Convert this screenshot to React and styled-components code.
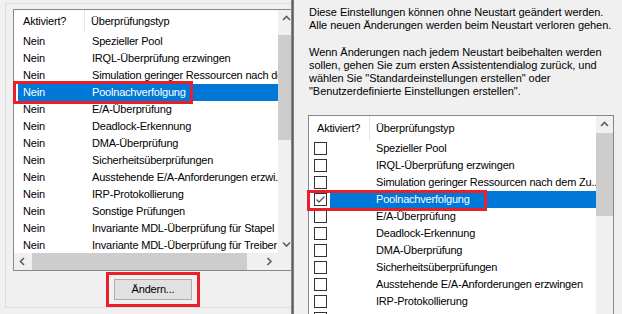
import React from "react";
import styled, { createGlobalStyle } from "styled-components";

const Global = createGlobalStyle`
  html, body { margin: 0; padding: 0; background: #f0f0f0; }
  body {
    font-family: "Liberation Sans", Arial, sans-serif;
    font-size: 11px;
    letter-spacing: -0.2px;
    color: #000;
  }
  * { box-sizing: border-box; }
`;

const Screen = styled.div`
  display: flex;
  width: 622px;
  height: 314px;
  overflow: hidden;
  background: #f0f0f0;
`;

const LeftWindow = styled.div`
  flex: 0 0 291px;
  overflow: hidden;
  padding: 3px 0 0 5px;
`;

const GroupBox = styled.div`
  width: 320px;
  height: 305px;
  border: 1px solid #dcdcdc;
  border-right: none;
  padding: 5px 0 0 7px;
  display: flex;
  flex-direction: column;
`;

const ListView = styled.div`
  position: relative;
  flex: none;
  width: ${(p) => p.$w}px;
  height: ${(p) => p.$h}px;
  margin-top: ${(p) => p.$mt || 0}px;
  border: 1px solid #828790;
  background: #fff;
  display: grid;
  grid-template-columns: ${(p) => p.$cw}px 17px;
  grid-template-rows: ${(p) => (p.$hscroll ? "1fr 17px" : "1fr")};
`;

const Content = styled.div`
  overflow: hidden;
  display: flex;
  flex-direction: column;
  white-space: nowrap;
`;

const Header = styled.div`
  display: flex;
  flex: none;
  height: ${(p) => p.$h}px;
  align-items: stretch;
`;

const HeaderCell = styled.div`
  flex: none;
  width: ${(p) => (p.$w ? `${p.$w}px` : "auto")};
  padding-left: ${(p) => p.$pad}px;
  display: flex;
  align-items: center;
  border-right: ${(p) => (p.$divider ? "1px solid #e5e5e5" : "none")};
  padding-bottom: 1px;
`;

const Row = styled.div`
  display: flex;
  flex: none;
  height: 17px;
  line-height: 17px;
  margin-left: ${(p) => p.$inset || 0}px;
  background: ${(p) => (p.$sel ? "#0078d7" : "transparent")};
  color: ${(p) => (p.$sel ? "#fff" : "#000")};
`;

const Cell = styled.div`
  flex: none;
  width: ${(p) => (p.$w ? `${p.$w}px` : "auto")};
  padding-left: ${(p) => p.$pad || 0}px;
`;

const CheckRow = styled.div`
  display: flex;
  flex: none;
  height: 17px;
  line-height: 17px;
`;

const CheckCell = styled.div`
  flex: none;
  width: 21px;
  padding-left: 5px;
  display: flex;
  align-items: center;
`;

const SelArea = styled.div`
  flex: 1;
  display: flex;
  background: ${(p) => (p.$sel ? "#0078d7" : "transparent")};
  color: ${(p) => (p.$sel ? "#fff" : "#000")};
`;

const Box = styled.div`
  width: 13px;
  height: 13px;
  border: 1px solid #333;
  background: #fff;
  display: flex;
  align-items: center;
  justify-content: center;
`;

const VScroll = styled.div`
  background: #f0f0f0;
  display: flex;
  flex-direction: column;
`;

const HScroll = styled.div`
  background: #f0f0f0;
  display: flex;
`;

const Corner = styled.div`
  background: #f0f0f0;
`;

const ArrowBtn = styled.div`
  flex: none;
  width: 17px;
  height: 17px;
  display: flex;
  align-items: center;
  justify-content: center;
`;

const VThumb = styled.div`
  flex: none;
  margin: ${(p) => p.$off}px 0 0;
  height: ${(p) => p.$len}px;
  width: 17px;
  background: #cdcdcd;
`;

const HThumb = styled.div`
  flex: none;
  margin-left: ${(p) => p.$off}px;
  width: ${(p) => p.$len}px;
  height: 17px;
  background: #cdcdcd;
`;

const Track = styled.div`
  flex: 1;
`;

const RedMark = styled.div`
  position: absolute;
  left: ${(p) => p.$x}px;
  top: ${(p) => p.$y}px;
  width: ${(p) => p.$w}px;
  height: ${(p) => p.$h}px;
  border: 3px solid #e8202a;
  pointer-events: none;
`;

const RedFrame = styled.div`
  align-self: flex-start;
  margin: 1px 0 0 93px;
  border: 3px solid #e8202a;
  padding: 4px 5px;
`;

const Button = styled.div`
  width: 78px;
  height: 21px;
  border: 1px solid #adadad;
  background: #e1e1e1;
  display: flex;
  align-items: center;
  justify-content: center;
  padding-bottom: 1px;
`;

const Divider = styled.div`
  flex: 0 0 3px;
  background: linear-gradient(to right, #9a9a9a, #5f5f5f 50%, #8c8c8c);
`;

const RightWindow = styled.div`
  flex: 1;
  padding: 6px 0 0 14px;
  display: flex;
  flex-direction: column;
`;

const Para = styled.p`
  margin: ${(p) => p.$mt}px 0 0 1px;
  line-height: 13px;
  letter-spacing: -0.05px;
  color: #000;
`;

const Chevron = ({ dir }) => {
  const pts = {
    up: "1,5 4.5,1.5 8,5",
    down: "1,1.5 4.5,5 8,1.5",
    left: "5,1 1.5,4.5 5,8",
    right: "1.5,1 5,4.5 1.5,8",
  }[dir];
  const horiz = dir === "left" || dir === "right";
  return (
    <svg width={horiz ? 7 : 9} height={horiz ? 9 : 7} viewBox={horiz ? "0 0 7 9" : "0 0 9 7"}>
      <polyline points={pts} fill="none" stroke="#606060" strokeWidth="1.6" />
    </svg>
  );
};

const Check = () => (
  <svg width="11" height="11" viewBox="0 0 11 11">
    <polyline points="1.5,5.5 4,8 9.5,2.5" fill="none" stroke="#555" strokeWidth="1.3" />
  </svg>
);

const leftItems = [
  "Spezieller Pool",
  "IRQL-Überprüfung erzwingen",
  "Simulation geringer Ressourcen nach dem Zufallsprinzip",
  "Poolnachverfolgung",
  "E/A-Überprüfung",
  "Deadlock-Erkennung",
  "DMA-Überprüfung",
  "Sicherheitsüberprüfungen",
  "Ausstehende E/A-Anforderungen erzwi...",
  "IRP-Protokollierung",
  "Sonstige Prüfungen",
  "Invariante MDL-Überprüfung für Stapel",
  "Invariante MDL-Überprüfung für Treiber",
];

const rightItems = [
  "Spezieller Pool",
  "IRQL-Überprüfung erzwingen",
  "Simulation geringer Ressourcen nach dem Zu...",
  "Poolnachverfolgung",
  "E/A-Überprüfung",
  "Deadlock-Erkennung",
  "DMA-Überprüfung",
  "Sicherheitsüberprüfungen",
  "Ausstehende E/A-Anforderungen erzwingen",
  "IRP-Protokollierung",
  "Sonstige Prüfungen",
];

export default function App() {
  return (
    <>
      <Global />
      <Screen>
        <LeftWindow>
          <GroupBox>
            <ListView $w={283} $h={262} $cw={264} $hscroll>
              <Content>
                <Header $h={23}>
                  <HeaderCell $w={71} $pad={9} $divider>Aktiviert?</HeaderCell>
                  <HeaderCell $pad={6}>Überprüfungstyp</HeaderCell>
                </Header>
                {leftItems.map((t, i) => (
                  <Row key={i} $inset={4} $sel={i === 3}>
                    <Cell $w={67} $pad={5}>Nein</Cell>
                    <Cell $pad={7}>{t}</Cell>
                  </Row>
                ))}
              </Content>
              <VScroll>
                <ArrowBtn><Chevron dir="up" /></ArrowBtn>
                <VThumb $off={8} $len={105} />
                <Track />
                <ArrowBtn><Chevron dir="down" /></ArrowBtn>
              </VScroll>
              <HScroll>
                <ArrowBtn><Chevron dir="left" /></ArrowBtn>
                <HThumb $off={1} $len={215} />
                <Track />
                <ArrowBtn><Chevron dir="right" /></ArrowBtn>
              </HScroll>
              <Corner />
              <RedMark $x={-1} $y={71} $w={180} $h={23} />
            </ListView>
            <RedFrame>
              <Button>Ändern...</Button>
            </RedFrame>
          </GroupBox>
        </LeftWindow>
        <Divider />
        <RightWindow>
          <Para $mt={0}>
            Diese Einstellungen können ohne Neustart geändert werden.
            <br />
            Alle neuen Änderungen werden beim Neustart verloren gehen.
          </Para>
          <Para $mt={14}>
            Wenn Änderungen nach jedem Neustart beibehalten werden
            <br />
            sollen, gehen Sie zum ersten Assistentendialog zurück, und
            <br />
            wählen Sie "Standardeinstellungen erstellen" oder
            <br />
            "Benutzerdefinierte Einstellungen erstellen".
          </Para>
          <ListView $w={306} $h={230} $cw={287} $mt={17}>
            <Content>
              <Header $h={24}>
                <HeaderCell $w={61} $pad={8} $divider>Aktiviert?</HeaderCell>
                <HeaderCell $pad={6}>Überprüfungstyp</HeaderCell>
              </Header>
              {rightItems.map((t, i) => (
                <CheckRow key={i}>
                  <CheckCell>
                    <Box>{i === 3 && <Check />}</Box>
                  </CheckCell>
                  <SelArea $sel={i === 3}>
                    <Cell $w={40} />
                    <Cell $pad={6}>{t}</Cell>
                  </SelArea>
                </CheckRow>
              ))}
            </Content>
            <VScroll>
              <ArrowBtn><Chevron dir="up" /></ArrowBtn>
              <VThumb $off={0} $len={83} />
              <Track />
            </VScroll>
            <RedMark $x={-2} $y={74} $w={180} $h={21} />
          </ListView>
        </RightWindow>
      </Screen>
    </>
  );
}
